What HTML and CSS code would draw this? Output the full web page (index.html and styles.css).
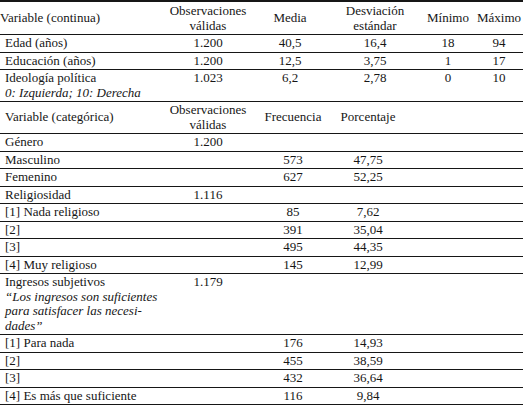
FILE: index.html
```html
<!DOCTYPE html>
<html lang="es">
<head>
<meta charset="utf-8">
<link rel="stylesheet" href="styles.css">
</head>
<body>
<table class="tbl tbl-cont">
  <colgroup>
    <col class="c-var"><col class="c-obs"><col class="c-media"><col class="c-desv"><col class="c-min"><col class="c-max">
  </colgroup>
  <thead>
    <tr class="head first">
      <th class="lbl">Variable (continua)</th>
      <th>Observaciones<br>válidas</th>
      <th>Media</th>
      <th>Desviación<br>estándar</th>
      <th>Mínimo</th>
      <th>Máximo</th>
    </tr>
  </thead>
  <tbody>
    <tr><td class="lbl">Edad (años)</td><td>1.200</td><td>40,5</td><td>16,4</td><td>18</td><td>94</td></tr>
    <tr><td class="lbl">Educación (años)</td><td>1.200</td><td>12,5</td><td>3,75</td><td>1</td><td>17</td></tr>
    <tr><td class="lbl">Ideología política<br><em>0: Izquierda; 10: Derecha</em></td><td>1.023</td><td>6,2</td><td>2,78</td><td>0</td><td>10</td></tr>
  </tbody>
</table>
<table class="tbl tbl-cat">
  <colgroup>
    <col class="c-var"><col class="c-obs"><col class="c-frec"><col class="c-porc"><col class="c-rest">
  </colgroup>
  <thead>
    <tr class="head">
      <th class="lbl">Variable (categórica)</th>
      <th>Observaciones<br>válidas</th>
      <th>Frecuencia</th>
      <th>Porcentaje</th>
      <th></th>
    </tr>
  </thead>
  <tbody>
    <tr><td class="lbl">Género</td><td>1.200</td><td></td><td></td><td></td></tr>
    <tr><td class="lbl">Masculino</td><td></td><td>573</td><td>47,75</td><td></td></tr>
    <tr><td class="lbl">Femenino</td><td></td><td>627</td><td>52,25</td><td></td></tr>
    <tr><td class="lbl">Religiosidad</td><td>1.116</td><td></td><td></td><td></td></tr>
    <tr><td class="lbl">[1] Nada religioso</td><td></td><td>85</td><td>7,62</td><td></td></tr>
    <tr><td class="lbl">[2]</td><td></td><td>391</td><td>35,04</td><td></td></tr>
    <tr><td class="lbl">[3]</td><td></td><td>495</td><td>44,35</td><td></td></tr>
    <tr><td class="lbl">[4] Muy religioso</td><td></td><td>145</td><td>12,99</td><td></td></tr>
    <tr><td class="lbl">Ingresos subjetivos<br><em>“Los ingresos son suficientes<br>para satisfacer las necesi-<br>dades”</em></td><td>1.179</td><td></td><td></td><td></td></tr>
    <tr><td class="lbl">[1] Para nada</td><td></td><td>176</td><td>14,93</td><td></td></tr>
    <tr><td class="lbl">[2]</td><td></td><td>455</td><td>38,59</td><td></td></tr>
    <tr><td class="lbl">[3]</td><td></td><td>432</td><td>36,64</td><td></td></tr>
    <tr><td class="lbl">[4] Es más que suficiente</td><td></td><td>116</td><td>9,84</td><td></td></tr>
  </tbody>
</table>
</body>
</html>
```
FILE: styles.css
```css
html, body {
  margin: 0;
  padding: 0;
  background: #ffffff;
}
body {
  font-family: "Liberation Serif", "Times New Roman", serif;
  font-size: 13px;
  color: #161616;
}
.tbl {
  width: 523px;
  border-collapse: collapse;
  table-layout: fixed;
}
.tbl-cont {
  border-top: 2px solid #161616;
}
.tbl th,
.tbl td {
  font-weight: normal;
  text-align: center;
  line-height: 14.5px;
  padding: 1px 0 1px 0;
  border-bottom: 1px solid #161616;
  white-space: nowrap;
}
.tbl td {
  vertical-align: top;
}
.tbl th {
  vertical-align: middle;
}
.tbl .head.first th {
  padding: 2px 0 1px 0;
}
.tbl .lbl {
  text-align: left;
  padding-left: 5px;
}
.tbl em {
  font-style: italic;
}
.c-var { width: 165px; }
.c-obs { width: 86px; }
.c-media { width: 78px; }
.c-desv { width: 92px; }
.c-min { width: 54px; }
.c-max { width: 48px; }
.c-frec { width: 84px; }
.c-porc { width: 66px; }
.c-rest { width: 122px; }
```
